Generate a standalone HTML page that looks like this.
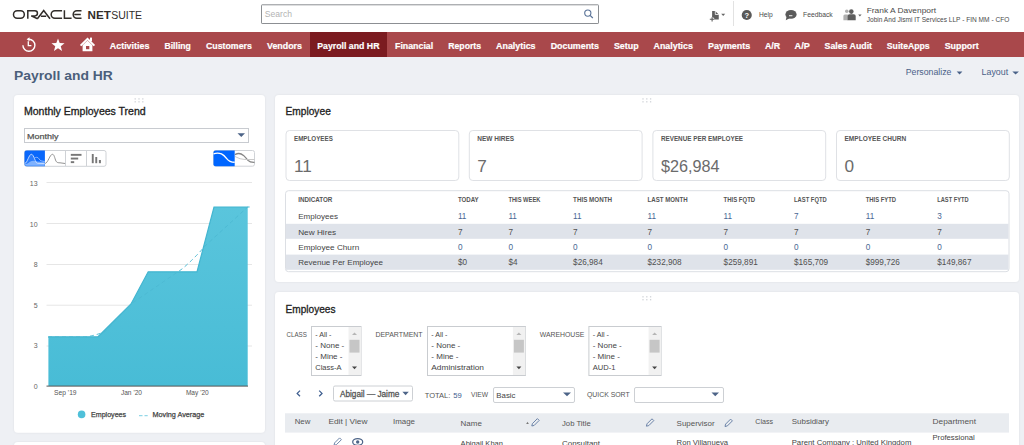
<!DOCTYPE html>
<html><head><meta charset="utf-8"><style>
*{margin:0;padding:0}html,body{width:1024px;height:445px;overflow:hidden;background:#eef0f4}
svg{display:block;font-family:"Liberation Sans", sans-serif}
</style></head><body>
<svg width="1024" height="445" viewBox="0 0 1024 445">
<rect x="0" y="0" width="1024" height="445" fill="#eef0f4" />
<rect x="0" y="0" width="1024" height="32" fill="#ffffff" />
<path d="M17.2 10.8 H20.6 A3.72 3.72 0 0 1 20.6 18.25 H17.2 A3.72 3.72 0 0 1 17.2 10.8z" fill="none" stroke="#312d2a" stroke-width="1.5" />
<path d="M27.8 18.8 V10.8 H34.9 A2.55 2.55 0 0 1 34.9 15.9 H31.2 L37.6 18.75" fill="none" stroke="#312d2a" stroke-width="1.5" />
<path d="M37.4 18.8 L43.7 10.5 L50 18.8 M40.9 16.2 H46.2" fill="none" stroke="#312d2a" stroke-width="1.5" />
<path d="M62.1 10.8 H54.9 A3.72 3.72 0 0 0 54.9 18.25 H62.1" fill="none" stroke="#312d2a" stroke-width="1.5" />
<path d="M64.4 10.2 V18.25 H71.6" fill="none" stroke="#312d2a" stroke-width="1.5" />
<path d="M81.5 10.8 H76.9 A3.72 3.72 0 0 0 76.9 18.25 H81.5 M74.2 14.5 H80.8" fill="none" stroke="#312d2a" stroke-width="1.5" />
<text x="87.6" y="18.7" font-size="11.6" fill="#312d2a" font-weight="bold" textLength="23.3" lengthAdjust="spacingAndGlyphs">NET</text>
<text x="111.2" y="18.7" font-size="11.6" fill="#312d2a" textLength="30.9" lengthAdjust="spacingAndGlyphs">SUITE</text>
<rect x="261.5" y="4.8" width="337" height="18.7" fill="#fff" rx="0.6" stroke="#8c8f93" stroke-width="1" />
<text x="264.8" y="16.6" font-size="8.6" fill="#b3b3b3" textLength="27.2" lengthAdjust="spacingAndGlyphs">Search</text>
<circle cx="587.8" cy="13.1" r="3.1" fill="none" stroke="#5a7398" stroke-width="1.1"/><line x1="590.1" y1="15.4" x2="592.8" y2="18" stroke="#5a7398" stroke-width="1.3"/>
<rect x="733" y="1" width="1" height="25" fill="#e2e2e2" />
<text x="759" y="16.9" font-size="7.8" fill="#4a4a4a" textLength="13.7" lengthAdjust="spacingAndGlyphs">Help</text>
<text x="803" y="16.8" font-size="7.8" fill="#4a4a4a" textLength="29.7" lengthAdjust="spacingAndGlyphs">Feedback</text>
<text x="866.7" y="13.1" font-size="7.2" fill="#4a4a4a" textLength="69.4" lengthAdjust="spacingAndGlyphs">Frank A Davenport</text>
<text x="866.7" y="21.6" font-size="7.2" fill="#4a4a4a" textLength="142.6" lengthAdjust="spacingAndGlyphs">Jobin And Jismi IT Services LLP - FIN MM - CFO</text>
<circle cx="746.75" cy="14.95" r="5.05" fill="#595959"/>
<text x="744.5" y="18.0" font-size="8" fill="#fff" font-weight="bold" textLength="4.6" lengthAdjust="spacingAndGlyphs">?</text>
<ellipse cx="791" cy="14.4" rx="5.6" ry="4.3" fill="#5a5a5a"/>
<path d="M786.6 16.5 L785.8 20.3 L789.6 18.2z" fill="#5a5a5a" />
<rect x="789" y="15.3" width="3.4" height="0.9" fill="#fff" />
<path d="M712.1 11 H715.2 L718.75 14.6 V19.6 H712.1z" fill="#5e5e5e" />
<path d="M715.3 11 V14.5 H718.8" fill="none" stroke="#fff" stroke-width="0.8" />
<path d="M709.8 19.3 h4.4 M712.1 17.2 v4.4" fill="none" stroke="#fff" stroke-width="2.6" />
<path d="M709.8 19.3 h4.4 M712.1 17.2 v4.4" fill="none" stroke="#5e5e5e" stroke-width="1.1" />
<path d="M721.2 13.8 h4 l-2 2.3z" fill="#666" />
<circle cx="846.8" cy="11.3" r="1.8" fill="#b0b0b0"/><circle cx="851.3" cy="11.6" r="2.3" fill="#5e5e5e"/>
<path d="M843.4 20.3 v-4.3 q0 -1.5 1.5 -1.5 h3 v5.8z" fill="#b0b0b0" />
<path d="M847.6 20.3 v-4.3 q0 -1.8 1.8 -1.8 h4.5 q1.8 0 1.8 1.8 v4.3z" fill="#5e5e5e" />
<path d="M858.2 14.4 h3.4 l-1.7 2.2z" fill="#666" />
<rect x="0" y="32" width="1024" height="25" fill="#a9484b" />
<rect x="310" y="32" width="77" height="25" fill="#7b1b20" />
<text x="109.8" y="48.5" font-size="9.5" fill="#ffffff" font-weight="bold" stroke="#ffffff" stroke-width="0.2" textLength="39.6" lengthAdjust="spacingAndGlyphs">Activities</text>
<text x="164.5" y="48.5" font-size="9.5" fill="#ffffff" font-weight="bold" stroke="#ffffff" stroke-width="0.2" textLength="26.3" lengthAdjust="spacingAndGlyphs">Billing</text>
<text x="206" y="48.5" font-size="9.5" fill="#ffffff" font-weight="bold" stroke="#ffffff" stroke-width="0.2" textLength="45.8" lengthAdjust="spacingAndGlyphs">Customers</text>
<text x="267" y="48.5" font-size="9.5" fill="#ffffff" font-weight="bold" stroke="#ffffff" stroke-width="0.2" textLength="35.0" lengthAdjust="spacingAndGlyphs">Vendors</text>
<text x="317.2" y="48.5" font-size="9.5" fill="#ffffff" font-weight="bold" stroke="#ffffff" stroke-width="0.2" textLength="62.3" lengthAdjust="spacingAndGlyphs">Payroll and HR</text>
<text x="395" y="48.5" font-size="9.5" fill="#ffffff" font-weight="bold" stroke="#ffffff" stroke-width="0.2" textLength="38.2" lengthAdjust="spacingAndGlyphs">Financial</text>
<text x="448.2" y="48.5" font-size="9.5" fill="#ffffff" font-weight="bold" stroke="#ffffff" stroke-width="0.2" textLength="32.9" lengthAdjust="spacingAndGlyphs">Reports</text>
<text x="496.1" y="48.5" font-size="9.5" fill="#ffffff" font-weight="bold" stroke="#ffffff" stroke-width="0.2" textLength="39.4" lengthAdjust="spacingAndGlyphs">Analytics</text>
<text x="550.7" y="48.5" font-size="9.5" fill="#ffffff" font-weight="bold" stroke="#ffffff" stroke-width="0.2" textLength="48.3" lengthAdjust="spacingAndGlyphs">Documents</text>
<text x="613.9" y="48.5" font-size="9.5" fill="#ffffff" font-weight="bold" stroke="#ffffff" stroke-width="0.2" textLength="24.7" lengthAdjust="spacingAndGlyphs">Setup</text>
<text x="653.6" y="48.5" font-size="9.5" fill="#ffffff" font-weight="bold" stroke="#ffffff" stroke-width="0.2" textLength="39.3" lengthAdjust="spacingAndGlyphs">Analytics</text>
<text x="708" y="48.5" font-size="9.5" fill="#ffffff" font-weight="bold" stroke="#ffffff" stroke-width="0.2" textLength="42.2" lengthAdjust="spacingAndGlyphs">Payments</text>
<text x="764.9" y="48.5" font-size="9.5" fill="#ffffff" font-weight="bold" stroke="#ffffff" stroke-width="0.2" textLength="15.2" lengthAdjust="spacingAndGlyphs">A/R</text>
<text x="794.6" y="48.5" font-size="9.5" fill="#ffffff" font-weight="bold" stroke="#ffffff" stroke-width="0.2" textLength="15.2" lengthAdjust="spacingAndGlyphs">A/P</text>
<text x="824.6" y="48.5" font-size="9.5" fill="#ffffff" font-weight="bold" stroke="#ffffff" stroke-width="0.2" textLength="47.4" lengthAdjust="spacingAndGlyphs">Sales Audit</text>
<text x="886.8" y="48.5" font-size="9.5" fill="#ffffff" font-weight="bold" stroke="#ffffff" stroke-width="0.2" textLength="42.9" lengthAdjust="spacingAndGlyphs">SuiteApps</text>
<text x="944.7" y="48.5" font-size="9.5" fill="#ffffff" font-weight="bold" stroke="#ffffff" stroke-width="0.2" textLength="34.0" lengthAdjust="spacingAndGlyphs">Support</text>
<path d="M22.9 45.2 A6 6 0 1 0 28.9 39.2" fill="none" stroke="#fff" stroke-width="1.4"/>
<path d="M26.6 39.2 l2.9 -2 v4z" fill="#fff" />
<path d="M28.3 41.3 v4.3 h3.1" fill="none" stroke="#fff" stroke-width="1.3" />
<path d="M58.00 38.40 L59.70 42.95 L64.56 43.17 L60.76 46.20 L62.06 50.88 L58.00 48.20 L53.94 50.88 L55.24 46.20 L51.44 43.17 L56.30 42.95z" fill="#fff" />
<path d="M80.6 45.6 L87.5 38.8 L94.4 45.6" fill="none" stroke="#fff" stroke-width="2" />
<path d="M82.6 45.2 L87.5 40.6 L92.4 45.2 V51.2 H82.6z" fill="#fff" />
<rect x="86" y="46" width="3.3" height="3.2" fill="#a9484b" />
<rect x="90" y="37.6" width="2" height="3.6" fill="#fff" />
<text x="14" y="79.9" font-size="13.4" fill="#4b5f7b" font-weight="bold" textLength="98.8" lengthAdjust="spacingAndGlyphs">Payroll and HR</text>
<text x="905.7" y="75.4" font-size="8.4" fill="#4a6288" textLength="45.8" lengthAdjust="spacingAndGlyphs">Personalize</text>
<path d="M956.7 71.5 h5.7 l-2.85 3z" fill="#4a6288" />
<text x="981.6" y="75.4" font-size="8.4" fill="#4a6288" textLength="26.6" lengthAdjust="spacingAndGlyphs">Layout</text>
<path d="M1012.3 71.5 h6.6 l-3.3 3z" fill="#4a6288" />
<defs><filter id="sh" x="-5%" y="-5%" width="110%" height="110%"><feDropShadow dx="0" dy="0" stdDeviation="1.2" flood-color="#000" flood-opacity="0.07"/></filter><linearGradient id="ag" x1="0" y1="0" x2="0" y2="1"><stop offset="0" stop-color="#5ac5dc"/><stop offset="1" stop-color="#48bcd6"/></linearGradient></defs>
<rect x="14" y="95" width="251" height="337.8" fill="#fff" rx="4" filter="url(#sh)"/>
<rect x="14" y="442" width="251" height="20" fill="#fff" rx="4" filter="url(#sh)"/>
<rect x="275" y="95" width="744" height="187" fill="#fff" rx="4" filter="url(#sh)"/>
<rect x="275" y="292" width="744" height="170" fill="#fff" rx="4" filter="url(#sh)"/>
<rect x="134.54999999999998" y="98.25" width="1.3" height="1.3" fill="#d0d3d8" />
<rect x="134.54999999999998" y="101.15" width="1.3" height="1.3" fill="#d0d3d8" />
<rect x="138.35" y="98.25" width="1.3" height="1.3" fill="#d0d3d8" />
<rect x="138.35" y="101.15" width="1.3" height="1.3" fill="#d0d3d8" />
<rect x="142.14999999999998" y="98.25" width="1.3" height="1.3" fill="#d0d3d8" />
<rect x="142.14999999999998" y="101.15" width="1.3" height="1.3" fill="#d0d3d8" />
<rect x="642.35" y="98.25" width="1.3" height="1.3" fill="#d0d3d8" />
<rect x="642.35" y="101.15" width="1.3" height="1.3" fill="#d0d3d8" />
<rect x="646.15" y="98.25" width="1.3" height="1.3" fill="#d0d3d8" />
<rect x="646.15" y="101.15" width="1.3" height="1.3" fill="#d0d3d8" />
<rect x="649.95" y="98.25" width="1.3" height="1.3" fill="#d0d3d8" />
<rect x="649.95" y="101.15" width="1.3" height="1.3" fill="#d0d3d8" />
<rect x="642.35" y="296.15000000000003" width="1.3" height="1.3" fill="#d0d3d8" />
<rect x="642.35" y="299.05" width="1.3" height="1.3" fill="#d0d3d8" />
<rect x="646.15" y="296.15000000000003" width="1.3" height="1.3" fill="#d0d3d8" />
<rect x="646.15" y="299.05" width="1.3" height="1.3" fill="#d0d3d8" />
<rect x="649.95" y="296.15000000000003" width="1.3" height="1.3" fill="#d0d3d8" />
<rect x="649.95" y="299.05" width="1.3" height="1.3" fill="#d0d3d8" />
<text x="24" y="114.5" font-size="10" fill="#222" stroke="#222" stroke-width="0.3" textLength="121.7" lengthAdjust="spacingAndGlyphs">Monthly Employees Trend</text>
<rect x="24.5" y="128.5" width="224" height="14" fill="#fff" stroke="#c8cbd0" stroke-width="1" />
<text x="27" y="138.7" font-size="8" fill="#555" stroke="#555" stroke-width="0.25" textLength="31.5" lengthAdjust="spacingAndGlyphs">Monthly</text>
<path d="M237.5 133.3 h7.5 l-3.75 3.7z" fill="#4d6488" />
<rect x="24.5" y="150.5" width="81.5" height="15.8" fill="#fff" rx="2" stroke="#cfd2d6" stroke-width="1" />
<path d="M26.5 150.5 h18.4 v15.8 h-18.4 a2 2 0 0 1 -2 -2 v-11.8 a2 2 0 0 1 2 -2z" fill="#0a68fb" />
<path d="M24.5 164.6 Q28 163.8 30 161.8 Q32 160.6 34.5 160.9 Q38 161.9 44.7 161.6 V165.8 H26.5 A2 2 0 0 1 24.5 163.8z" fill="#6aa6ff" />
<path d="M24.7 163.5 C27.5 163 28.8 154.3 31.4 154.3 C34 154.3 35.2 163.3 37.5 163.3 L44.7 163.6 V165.8 H24.7z" fill="#ffffff" opacity="0.14"/>
<path d="M24.7 163.5 C27.5 163 28.8 154.3 31.4 154.3 C34 154.3 35.2 163.3 37.5 163.3 L44.7 163.6" fill="none" stroke="#cfe0ff" stroke-width="0.9" />
<path d="M33.9 158.7 C35 157.4 36 157.3 37 157.3 C38.6 157.3 39.4 160.3 41 160.8 L44.7 161.5" fill="none" stroke="#9ec2ff" stroke-width="0.8" />
<rect x="65" y="151" width="1" height="15" fill="#cfd2d6" />
<rect x="86" y="151" width="1" height="15" fill="#cfd2d6" />
<path d="M45.1 163.5 C48 163 49.8 154.3 52.5 154.3 C54.6 154.3 55 160.5 56.5 161.8 C57.5 162.8 58.5 162.8 60 162.8 L65.1 163.5" fill="none" stroke="#8c8c8c" stroke-width="0.95" />
<rect x="70.8" y="153.9" width="10.7" height="1.9" fill="#777" />
<rect x="70.8" y="157.6" width="7.4" height="1.9" fill="#777" />
<rect x="70.8" y="161.2" width="3.4" height="1.9" fill="#777" />
<rect x="91.8" y="154" width="1.9" height="9.2" fill="#777" />
<rect x="95.3" y="157" width="1.9" height="6.2" fill="#777" />
<rect x="98.9" y="160" width="2" height="3.2" fill="#777" />
<rect x="213.5" y="150.5" width="41" height="15.7" fill="#fff" rx="2" stroke="#d0d3d7" stroke-width="1" />
<path d="M215.5 150.5 h19.2 v15.7 h-19.2 a2 2 0 0 1 -2 -2 v-11.7 a2 2 0 0 1 2 -2z" fill="#0066ff" />
<path d="M213.5 153.8 q4 -1.3 8 0 q2.5 1.2 5 4.5 q3 4 8.2 4" fill="none" stroke="#fff" stroke-width="1.4" />
<path d="M235 154.6 q4.5 -2.6 8.5 0.8 q2.5 2.5 4.5 5 q2 2.2 6.5 2" fill="none" stroke="#858585" stroke-width="1.3" />
<path d="M235 156.5 q5 3 10 3 h9.5" fill="none" stroke="#c4c4c4" stroke-width="0.9" />
<rect x="46.5" y="182.0" width="205.5" height="1" fill="#e6e6e6" />
<rect x="46.5" y="223.0" width="205.5" height="1" fill="#e6e6e6" />
<rect x="46.5" y="264.0" width="205.5" height="1" fill="#e6e6e6" />
<rect x="46.5" y="304.7" width="205.5" height="1" fill="#e6e6e6" />
<rect x="46.5" y="345.5" width="205.5" height="1" fill="#e6e6e6" />
<text x="37.6" y="186.1" font-size="7" fill="#666" text-anchor="end">13</text>
<text x="37.6" y="226.6" font-size="7" fill="#666" text-anchor="end">10</text>
<text x="37.6" y="267.1" font-size="7" fill="#666" text-anchor="end">8</text>
<text x="37.6" y="307.6" font-size="7" fill="#666" text-anchor="end">5</text>
<text x="37.6" y="348.1" font-size="7" fill="#666" text-anchor="end">3</text>
<text x="37.6" y="388.5" font-size="7" fill="#666" text-anchor="end">0</text>
<path d="M48.4 386 L48.4 336.8 L98 336.8 L131 304 L148.2 271.8 L197 271.8 L214 207 L247.7 207 L247.7 386z" fill="url(#ag)" />
<path d="M48.4 336.8 L98 336.8 L131 304 L148.2 271.8 L197 271.8 L214 207 L247.7 207 L249.6 207" fill="none" stroke="#43b5d0" stroke-width="1.2" />
<path d="M48 337 L84 337 Q95 336 106 331 L131 304 L182 269 Q195 258 205 246 L247.7 207" fill="none" stroke="#59c2da" stroke-width="0.9" stroke-dasharray="4 3" opacity="0.9"/>
<path d="M48 337 L84 337 Q95 336 106 331 L131 304 L182 269 Q195 258 205 246 L247.7 207" fill="none" stroke="#2fa5c2" stroke-width="0.8" stroke-dasharray="4 3" opacity="0.35"/>
<rect x="46.5" y="385.6" width="201.5" height="1" fill="#555" />
<text x="54.1" y="395" font-size="7" fill="#555" textLength="22.5" lengthAdjust="spacingAndGlyphs">Sep '19</text>
<text x="120.9" y="395" font-size="7" fill="#555" textLength="21.1" lengthAdjust="spacingAndGlyphs">Jan '20</text>
<text x="185.9" y="395" font-size="7" fill="#555" textLength="22.8" lengthAdjust="spacingAndGlyphs">May '20</text>
<circle cx="81.6" cy="414.4" r="3.8" fill="#4fc0d9"/>
<text x="91" y="417.4" font-size="7.5" fill="#444" stroke="#444" stroke-width="0.25" textLength="35.1" lengthAdjust="spacingAndGlyphs">Employees</text>
<path d="M139 415.7 h3.5 M144.5 415.7 h3.2" fill="none" stroke="#59c2da" stroke-width="0.8" />
<text x="152.5" y="417.4" font-size="7.5" fill="#444" stroke="#444" stroke-width="0.25" textLength="51.9" lengthAdjust="spacingAndGlyphs">Moving Average</text>
<text x="285.5" y="114.5" font-size="10" fill="#222" stroke="#222" stroke-width="0.3" textLength="45.3" lengthAdjust="spacingAndGlyphs">Employee</text>
<rect x="286.0" y="130.5" width="172.8" height="50" fill="#fff" rx="3.5" stroke="#dfe1e5" stroke-width="1" />
<text x="294.0" y="140.8" font-size="7.4" fill="#555" font-weight="bold" textLength="38.8" lengthAdjust="spacingAndGlyphs">EMPLOYEES</text>
<text x="294.0" y="171.9" font-size="17.2" fill="#6b6b6b">11</text>
<rect x="469.3" y="130.5" width="172.8" height="50" fill="#fff" rx="3.5" stroke="#dfe1e5" stroke-width="1" />
<text x="477.3" y="140.8" font-size="7.4" fill="#555" font-weight="bold" textLength="36.8" lengthAdjust="spacingAndGlyphs">NEW HIRES</text>
<text x="477.3" y="171.9" font-size="17.2" fill="#6b6b6b">7</text>
<rect x="652.9" y="130.5" width="172.8" height="50" fill="#fff" rx="3.5" stroke="#dfe1e5" stroke-width="1" />
<text x="660.9" y="140.8" font-size="7.4" fill="#555" font-weight="bold" textLength="82.2" lengthAdjust="spacingAndGlyphs">REVENUE PER EMPLOYEE</text>
<text x="660.9" y="171.9" font-size="17.2" fill="#6b6b6b" textLength="58.6" lengthAdjust="spacingAndGlyphs">$26,984</text>
<rect x="836.5" y="130.5" width="172.8" height="50" fill="#fff" rx="3.5" stroke="#dfe1e5" stroke-width="1" />
<text x="844.5" y="140.8" font-size="7.4" fill="#555" font-weight="bold" textLength="61.7" lengthAdjust="spacingAndGlyphs">EMPLOYEE CHURN</text>
<text x="844.5" y="171.9" font-size="17.2" fill="#6b6b6b">0</text>
<rect x="285.5" y="190.7" width="723.5" height="81" fill="#fff" rx="3" stroke="#dcdfe4" stroke-width="1" />
<rect x="286" y="223.8" width="722.5" height="15" fill="#dfe3ea" />
<rect x="286" y="254.6" width="722.5" height="15.2" fill="#dfe3ea" />
<text x="298.2" y="202.3" font-size="6.8" fill="#555" font-weight="bold" textLength="34.2" lengthAdjust="spacingAndGlyphs">INDICATOR</text>
<text x="457.9" y="202.3" font-size="6.8" fill="#555" font-weight="bold" textLength="20.8" lengthAdjust="spacingAndGlyphs">TODAY</text>
<text x="508.4" y="202.3" font-size="6.8" fill="#555" font-weight="bold" textLength="32.0" lengthAdjust="spacingAndGlyphs">THIS WEEK</text>
<text x="573.1" y="202.3" font-size="6.8" fill="#555" font-weight="bold" textLength="38.9" lengthAdjust="spacingAndGlyphs">THIS MONTH</text>
<text x="647.5" y="202.3" font-size="6.8" fill="#555" font-weight="bold" textLength="40.1" lengthAdjust="spacingAndGlyphs">LAST MONTH</text>
<text x="723.6" y="202.3" font-size="6.8" fill="#555" font-weight="bold" textLength="31.5" lengthAdjust="spacingAndGlyphs">THIS FQTD</text>
<text x="794" y="202.3" font-size="6.8" fill="#555" font-weight="bold" textLength="32.7" lengthAdjust="spacingAndGlyphs">LAST FQTD</text>
<text x="865.7" y="202.3" font-size="6.8" fill="#555" font-weight="bold" textLength="30.4" lengthAdjust="spacingAndGlyphs">THIS FYTD</text>
<text x="937.3" y="202.3" font-size="6.8" fill="#555" font-weight="bold" textLength="31.2" lengthAdjust="spacingAndGlyphs">LAST FYTD</text>
<text x="298.2" y="219.3" font-size="7.8" fill="#444" textLength="39.8" lengthAdjust="spacingAndGlyphs">Employees</text>
<text x="457.9" y="219.3" font-size="8.2" fill="#4a6894">11</text>
<text x="508.4" y="219.3" font-size="8.2" fill="#4a6894">11</text>
<text x="573.1" y="219.3" font-size="8.2" fill="#4a6894">11</text>
<text x="647.5" y="219.3" font-size="8.2" fill="#4a6894">11</text>
<text x="723.6" y="219.3" font-size="8.2" fill="#4a6894">11</text>
<text x="794" y="219.3" font-size="8.2" fill="#4a6894">7</text>
<text x="865.7" y="219.3" font-size="8.2" fill="#4a6894">11</text>
<text x="937.3" y="219.3" font-size="8.2" fill="#4a6894">3</text>
<text x="298.2" y="234.5" font-size="7.8" fill="#444" textLength="37.9" lengthAdjust="spacingAndGlyphs">New Hires</text>
<text x="457.9" y="234.5" font-size="8.2" fill="#505050">7</text>
<text x="508.4" y="234.5" font-size="8.2" fill="#505050">7</text>
<text x="573.1" y="234.5" font-size="8.2" fill="#505050">7</text>
<text x="647.5" y="234.5" font-size="8.2" fill="#505050">7</text>
<text x="723.6" y="234.5" font-size="8.2" fill="#505050">7</text>
<text x="794" y="234.5" font-size="8.2" fill="#505050">7</text>
<text x="865.7" y="234.5" font-size="8.2" fill="#505050">7</text>
<text x="937.3" y="234.5" font-size="8.2" fill="#505050">7</text>
<text x="298.2" y="249.8" font-size="7.8" fill="#444" textLength="61.0" lengthAdjust="spacingAndGlyphs">Employee Churn</text>
<text x="457.9" y="249.8" font-size="8.2" fill="#4a6894">0</text>
<text x="508.4" y="249.8" font-size="8.2" fill="#4a6894">0</text>
<text x="573.1" y="249.8" font-size="8.2" fill="#4a6894">0</text>
<text x="647.5" y="249.8" font-size="8.2" fill="#4a6894">0</text>
<text x="723.6" y="249.8" font-size="8.2" fill="#4a6894">0</text>
<text x="794" y="249.8" font-size="8.2" fill="#4a6894">0</text>
<text x="865.7" y="249.8" font-size="8.2" fill="#4a6894">0</text>
<text x="937.3" y="249.8" font-size="8.2" fill="#4a6894">0</text>
<text x="298.2" y="265.2" font-size="7.8" fill="#444" textLength="84.8" lengthAdjust="spacingAndGlyphs">Revenue Per Employee</text>
<text x="457.9" y="265.2" font-size="8.2" fill="#505050">$0</text>
<text x="508.4" y="265.2" font-size="8.2" fill="#505050">$4</text>
<text x="573.1" y="265.2" font-size="8.2" fill="#505050">$26,984</text>
<text x="647.5" y="265.2" font-size="8.2" fill="#505050">$232,908</text>
<text x="723.6" y="265.2" font-size="8.2" fill="#505050">$259,891</text>
<text x="794" y="265.2" font-size="8.2" fill="#505050">$165,709</text>
<text x="865.7" y="265.2" font-size="8.2" fill="#505050">$999,726</text>
<text x="937.3" y="265.2" font-size="8.2" fill="#505050">$149,867</text>
<text x="285.5" y="313" font-size="10" fill="#222" stroke="#222" stroke-width="0.3" textLength="50.0" lengthAdjust="spacingAndGlyphs">Employees</text>
<text x="286.5" y="337.3" font-size="7.3" fill="#555" textLength="20.4" lengthAdjust="spacingAndGlyphs">CLASS</text>
<rect x="311.5" y="326.5" width="49.5" height="49" fill="#fff" stroke="#c9ccd0" stroke-width="1" />
<rect x="348.5" y="327" width="12.5" height="48" fill="#f1f1f1" />
<rect x="349.5" y="339.8" width="10" height="12.8" fill="#c6c6c6" />
<path d="M352.0 335 h5 l-2.5 -2.6z" fill="#b5b5b5" />
<path d="M352.0 366.6 h5 l-2.5 2.6z" fill="#444" />
<text x="315.3" y="336.5" font-size="8" fill="#444" textLength="16.2" lengthAdjust="spacingAndGlyphs">- All -</text>
<text x="315.3" y="347.7" font-size="8" fill="#444" textLength="29.0" lengthAdjust="spacingAndGlyphs">- None -</text>
<text x="315.3" y="358.9" font-size="8" fill="#444" textLength="27.2" lengthAdjust="spacingAndGlyphs">- Mine -</text>
<text x="315.3" y="370.1" font-size="8" fill="#444" textLength="26.2" lengthAdjust="spacingAndGlyphs">Class-A</text>
<text x="375.5" y="337.3" font-size="7.3" fill="#555" textLength="47.1" lengthAdjust="spacingAndGlyphs">DEPARTMENT</text>
<rect x="427.5" y="326.5" width="97.89999999999998" height="49" fill="#fff" stroke="#c9ccd0" stroke-width="1" />
<rect x="512.9" y="327" width="12.5" height="48" fill="#f1f1f1" />
<rect x="513.9" y="339.8" width="10" height="12.8" fill="#c6c6c6" />
<path d="M516.4 335 h5 l-2.5 -2.6z" fill="#b5b5b5" />
<path d="M516.4 366.6 h5 l-2.5 2.6z" fill="#444" />
<text x="431.3" y="336.5" font-size="8" fill="#444" textLength="16.2" lengthAdjust="spacingAndGlyphs">- All -</text>
<text x="431.3" y="347.7" font-size="8" fill="#444" textLength="29.0" lengthAdjust="spacingAndGlyphs">- None -</text>
<text x="431.3" y="358.9" font-size="8" fill="#444" textLength="27.2" lengthAdjust="spacingAndGlyphs">- Mine -</text>
<text x="431.3" y="370.1" font-size="8" fill="#444" textLength="52.7" lengthAdjust="spacingAndGlyphs">Administration</text>
<text x="539.7" y="337.3" font-size="7.3" fill="#555" textLength="44.7" lengthAdjust="spacingAndGlyphs">WAREHOUSE</text>
<rect x="588.9" y="326.5" width="72.20000000000005" height="49" fill="#fff" stroke="#c9ccd0" stroke-width="1" />
<rect x="648.6" y="327" width="12.5" height="48" fill="#f1f1f1" />
<rect x="649.6" y="339.8" width="10" height="12.8" fill="#c6c6c6" />
<path d="M652.1 335 h5 l-2.5 -2.6z" fill="#b5b5b5" />
<path d="M652.1 366.6 h5 l-2.5 2.6z" fill="#444" />
<text x="592.6999999999999" y="336.5" font-size="8" fill="#444" textLength="16.3" lengthAdjust="spacingAndGlyphs">- All -</text>
<text x="592.6999999999999" y="347.7" font-size="8" fill="#444" textLength="29.1" lengthAdjust="spacingAndGlyphs">- None -</text>
<text x="592.6999999999999" y="358.9" font-size="8" fill="#444" textLength="27.3" lengthAdjust="spacingAndGlyphs">- Mine -</text>
<text x="592.6999999999999" y="370.1" font-size="8" fill="#444" textLength="22.7" lengthAdjust="spacingAndGlyphs">AUD-1</text>
<path d="M300 390.6 l-2.8 2.8 l2.8 2.8" fill="none" stroke="#3f5f90" stroke-width="1.3" />
<path d="M319.2 390.6 l2.8 2.8 l-2.8 2.8" fill="none" stroke="#3f5f90" stroke-width="1.3" />
<rect x="333.5" y="386" width="79" height="15" fill="#fff" rx="1.5" stroke="#cdd0d4" stroke-width="1" />
<text x="340" y="396.8" font-size="8.5" fill="#555" stroke="#555" stroke-width="0.3" textLength="59.3" lengthAdjust="spacingAndGlyphs">Abigail — Jaime</text>
<path d="M402.4 391.8 h6.4 l-3.2 3.4z" fill="#4d6488" />
<text x="424.7" y="397.5" font-size="7.5" fill="#555" textLength="25.6" lengthAdjust="spacingAndGlyphs">TOTAL:</text>
<text x="453.3" y="397.5" font-size="7.8" fill="#3d5c8e" textLength="8.5" lengthAdjust="spacingAndGlyphs">59</text>
<text x="471" y="397.3" font-size="7.3" fill="#555" textLength="17.0" lengthAdjust="spacingAndGlyphs">VIEW</text>
<rect x="493.5" y="387.5" width="81" height="15" fill="#fff" rx="1.5" stroke="#cdd0d4" stroke-width="1" />
<text x="496.3" y="398" font-size="8" fill="#444" textLength="19.2" lengthAdjust="spacingAndGlyphs">Basic</text>
<path d="M563 392.5 h8 l-4 3.8z" fill="#4d6488" />
<text x="586.9" y="397.3" font-size="7.3" fill="#555" textLength="42.8" lengthAdjust="spacingAndGlyphs">QUICK SORT</text>
<rect x="634.5" y="387.5" width="89" height="15" fill="#fff" rx="1.5" stroke="#cdd0d4" stroke-width="1" />
<path d="M711.5 392.5 h7.5 l-3.75 3.8z" fill="#4d6488" />
<rect x="285" y="413.3" width="724" height="19.3" fill="#e9ecf0" />
<text x="294.7" y="424.2" font-size="8" fill="#555" textLength="15.6" lengthAdjust="spacingAndGlyphs">New</text>
<text x="328.4" y="424.2" font-size="8" fill="#555" textLength="39.1" lengthAdjust="spacingAndGlyphs">Edit | View</text>
<text x="393" y="424.2" font-size="8" fill="#555" textLength="22.0" lengthAdjust="spacingAndGlyphs">Image</text>
<text x="460.6" y="425.5" font-size="8" fill="#555" textLength="21.3" lengthAdjust="spacingAndGlyphs">Name</text>
<text x="562" y="425.5" font-size="8" fill="#555" textLength="28.7" lengthAdjust="spacingAndGlyphs">Job Title</text>
<text x="676.6" y="425.8" font-size="8" fill="#555" textLength="38.1" lengthAdjust="spacingAndGlyphs">Supervisor</text>
<text x="755.3" y="423.5" font-size="8" fill="#555" textLength="17.7" lengthAdjust="spacingAndGlyphs">Class</text>
<text x="791.7" y="423.5" font-size="8" fill="#555" textLength="37.3" lengthAdjust="spacingAndGlyphs">Subsidiary</text>
<text x="932.5" y="423.5" font-size="8" fill="#555" textLength="43.5" lengthAdjust="spacingAndGlyphs">Department</text>
<path d="M526.2 424 l1.3 -2.2 l1.3 2.2z" fill="#777" />
<path d="M531.8 426 l0.6 -2.4 l5 -5 l1.8 1.8 l-5 5z" fill="none" stroke="#5f78a0" stroke-width="0.9" />
<path d="M646.4 426.2 l0.6 -2.4 l5 -5 l1.8 1.8 l-5 5z" fill="none" stroke="#5f78a0" stroke-width="0.9" />
<path d="M725 426.5 l0.6 -2.4 l5 -5 l1.8 1.8 l-5 5z" fill="none" stroke="#5f78a0" stroke-width="0.9" />
<path d="M334 445.3 l0.6 -2.4 l5 -5 l1.8 1.8 l-5 5z" fill="none" stroke="#5f78a0" stroke-width="0.9" />
<ellipse cx="357.7" cy="442" rx="5" ry="3.4" fill="none" stroke="#4d6488" stroke-width="1.25"/><circle cx="357.7" cy="442" r="1.7" fill="#4d6488"/>
<text x="460.6" y="446" font-size="8" fill="#444" textLength="42.4" lengthAdjust="spacingAndGlyphs">Abigail Khan</text>
<text x="562" y="446" font-size="8" fill="#444" textLength="38.0" lengthAdjust="spacingAndGlyphs">Consultant</text>
<text x="676.6" y="445.2" font-size="8" fill="#444" textLength="51.4" lengthAdjust="spacingAndGlyphs">Ron Villanueva</text>
<text x="791.7" y="445" font-size="8" fill="#444" textLength="119.7" lengthAdjust="spacingAndGlyphs">Parent Company : United Kingdom</text>
<text x="932.5" y="439.8" font-size="8" fill="#444" textLength="42.2" lengthAdjust="spacingAndGlyphs">Professional</text>
</svg></body></html>
